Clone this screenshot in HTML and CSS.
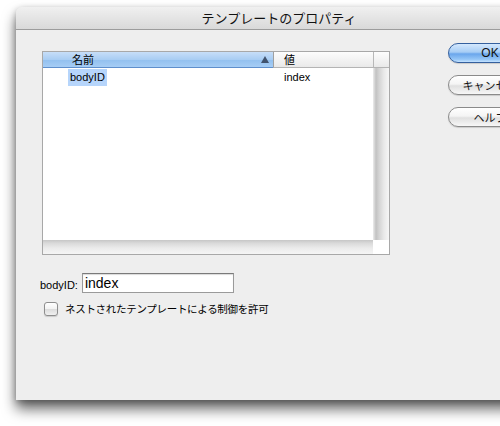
FILE: index.html
```html
<!DOCTYPE html>
<html lang="ja">
<head>
<meta charset="utf-8">
<title>テンプレートのプロパティ</title>
<link rel="stylesheet" href="styles.css">
</head>
<body>
<div class="window">
  <div class="titlebar">テンプレートのプロパティ</div>
  <div class="content">
    <div class="main">
      <div class="table">
        <div class="th th-name"><span>名前</span><svg class="sort" width="8" height="7" viewBox="0 0 8 7"><path d="M4 0 L8 7 L0 7 Z" fill="#41536e"/></svg></div>
        <div class="th th-value">値</div>
        <div class="th th-corner"></div>
        <div class="rows">
          <div class="row">
            <div class="cell cell-name"><span class="sel">bodyID</span></div>
            <div class="cell cell-value">index</div>
          </div>
        </div>
        <div class="vscroll"></div>
        <div class="hscroll"></div>
        <div class="corner"></div>
      </div>
      <div class="field">
        <label class="field-label" for="bodyid">bodyID:</label>
        <input class="field-input" id="bodyid" type="text" value="index">
      </div>
      <label class="check">
        <span class="checkbox"></span>
        <span class="check-label">ネストされたテンプレートによる制御を許可</span>
      </label>
    </div>
    <div class="buttons">
      <div class="btn btn-default">OK</div>
      <div class="btn">キャンセル</div>
      <div class="btn">ヘルプ</div>
    </div>
  </div>
</div>
</body>
</html>
```

FILE: styles.css
```css
html, body {
  margin: 0;
  padding: 0;
}
body {
  width: 500px;
  height: 426px;
  overflow: hidden;
  background: #ffffff;
  font-family: "Liberation Sans", "Noto Sans CJK JP", sans-serif;
  font-size: 11px;
  color: #000;
}
.window {
  margin: 7px 0 0 16px;
  width: 526px;
  height: 393px;
  background: #eeeeee;
  border-radius: 6px 6px 0 0;
  box-shadow: 0 9px 14px rgba(0, 0, 0, 0.6), 0 2px 6px rgba(0, 0, 0, 0.25);
  display: flex;
  flex-direction: column;
}
.titlebar {
  height: 22px;
  line-height: 22px;
  border-radius: 6px 6px 0 0;
  border-bottom: 1px solid #9c9c9c;
  background: linear-gradient(#f0f0f0, #d9d9d9);
  text-align: center;
  font-family: "Noto Sans CJK JP", sans-serif;
  font-size: 13px;
  color: #111;
}
.content {
  display: flex;
  padding: 13px 0 0 26px;
}
.main {
  margin-top: 8px;
  width: 348px;
  display: flex;
  flex-direction: column;
}
.table {
  box-sizing: border-box;
  width: 348px;
  height: 204px;
  border: 1px solid #a8a8a8;
  background: #ffffff;
  display: grid;
  grid-template-columns: 230px 100px 16px;
  grid-template-rows: 16px 1fr 14px;
}
.th {
  box-sizing: border-box;
  font-family: "Noto Sans CJK JP", sans-serif;
  font-size: 11px;
  line-height: 15px;
  border-bottom: 1px solid #b4b4b4;
  background: linear-gradient(#fdfdfd, #e9e9e9);
}
.th-name {
  display: flex;
  align-items: center;
  justify-content: space-between;
  padding: 0 4px 0 29px;
  background: linear-gradient(#c7def8 0%, #a9cdf3 50%, #92c0ef 51%, #a6cdf5 100%);
  border-bottom: 1px solid #5f8fcc;
}
.sort {
  display: block;
}
.th-value {
  border-left: 1px solid #a0a0a0;
  padding-left: 10px;
}
.th-corner {
  border-left: 1px solid #b8b8b8;
}
.rows {
  grid-column: 1 / 3;
  grid-row: 2;
}
.row {
  display: grid;
  grid-template-columns: 230px 100px;
  height: 18px;
  align-items: center;
}
.cell-name {
  padding-left: 25px;
}
.sel {
  display: inline-block;
  background: #b6d5fb;
  padding: 0 2px;
  line-height: 17px;
}
.cell-value {
  padding-left: 11px;
}
.vscroll {
  grid-column: 3;
  grid-row: 2;
  background: linear-gradient(to right, #ececec 0, #c2c2c2 3px, #d3d3d3 6px, #e9e9e9 11px, #f6f6f6 16px);
}
.hscroll {
  grid-column: 1 / 3;
  grid-row: 3;
  background: linear-gradient(#c6c6c6 0, #d9d9d9 3px, #ebebeb 8px, #f5f5f5 14px);
}
.corner {
  grid-column: 3;
  grid-row: 3;
  background: #ffffff;
}
.field {
  display: flex;
  align-items: flex-end;
  margin-top: 18px;
  margin-left: -2px;
}
.field-label {
  font-size: 11px;
  line-height: 13px;
  margin-right: 4px;
  margin-bottom: 1px;
}
.field-input {
  box-sizing: border-box;
  width: 152px;
  height: 20px;
  margin: 0;
  padding: 0 2px;
  border: 1px solid #9a9a9a;
  border-top-color: #7a7a7a;
  box-shadow: inset 0 1px 1px rgba(0, 0, 0, 0.15);
  background: #ffffff;
  font-family: "Liberation Sans", sans-serif;
  font-size: 14px;
  line-height: 18px;
  color: #000;
  outline: none;
}
.check {
  display: flex;
  align-items: center;
  margin-top: 8px;
  margin-left: 2px;
}
.checkbox {
  box-sizing: border-box;
  width: 14px;
  height: 14px;
  border: 1px solid #8e8e8e;
  border-radius: 3px;
  background: linear-gradient(#ffffff, #f2f2f2 50%, #dcdcdc 51%, #f0f0f0);
  box-shadow: 0 1px 1px rgba(0, 0, 0, 0.15);
  margin-right: 7px;
}
.check-label {
  font-family: "Noto Sans CJK JP", sans-serif;
  font-size: 10.5px;
  letter-spacing: -0.3px;
}
.buttons {
  margin-left: 58px;
  display: flex;
  flex-direction: column;
  gap: 12px;
}
.btn {
  box-sizing: border-box;
  width: 84px;
  height: 20px;
  border-radius: 10px;
  border: 1px solid #8a8a8a;
  background: linear-gradient(#ffffff 0%, #f4f4f4 45%, #e0e0e0 55%, #f7f7f7 100%);
  box-shadow: 0 1px 1px rgba(0, 0, 0, 0.15);
  text-align: center;
  line-height: 18px;
  font-family: "Noto Sans CJK JP", "Liberation Sans", sans-serif;
  font-size: 11px;
  color: #111;
}
.btn-default {
  font-family: "Liberation Sans", sans-serif;
  font-size: 12px;
  border-color: #35609e;
  background: linear-gradient(#d4e8fd 0%, #a7cdf5 45%, #6aa6ec 55%, #95c6f7 85%, #c4e2ff 100%);
}
```
